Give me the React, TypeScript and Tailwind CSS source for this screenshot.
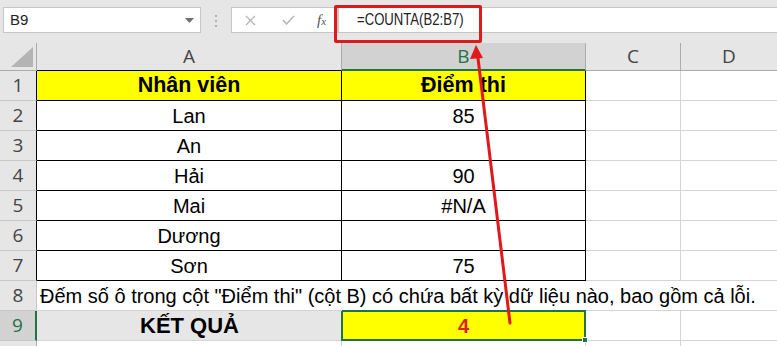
import React from "react";

const cols = ["A", "B", "C", "D"];

type Row = {
    n: number;
    a?: string;
    b?: string;
};

const rows: Row[] = [
    { n: 1, a: "Nhân viên", b: "Điểm thi" },
    { n: 2, a: "Lan", b: "85" },
    { n: 3, a: "An", b: "" },
    { n: 4, a: "Hải", b: "90" },
    { n: 5, a: "Mai", b: "#N/A" },
    { n: 6, a: "Dương", b: "" },
    { n: 7, a: "Sơn", b: "75" },
];

function FormulaBar() {
    return (
        <div className="flex items-start h-[43px] bg-[#e6e6e6] pt-[7px] pl-[3px]">
            <div className="flex items-center justify-between w-[198px] h-[26px] bg-white border border-[#c6c6c6] pl-[6px] pr-[6px]">
                <span className="text-[15px] text-[#222]">B9</span>
                <svg width="9" height="5" viewBox="0 0 9 5">
                    <path d="M0 0 L9 0 L4.5 5 Z" fill="#707070" />
                </svg>
            </div>
            <div className="flex flex-col gap-[3px] w-[30px] items-center pt-[8px]">
                <span className="w-[2px] h-[2px] bg-[#b0b0b0]" />
                <span className="w-[2px] h-[2px] bg-[#b0b0b0]" />
                <span className="w-[2px] h-[2px] bg-[#b0b0b0]" />
            </div>
            <div className="flex items-center w-[107px] h-[26px] bg-white border border-[#c6c6c6]">
                <svg className="ml-[13px]" width="11" height="11" viewBox="0 0 11 11">
                    <path d="M1 1 L10 10 M10 1 L1 10" stroke="#b8b8b8" strokeWidth="1.4" />
                </svg>
                <svg className="ml-[26px]" width="13" height="10" viewBox="0 0 13 10">
                    <path d="M1 5 L4.5 9 L12 1" stroke="#b8b8b8" strokeWidth="1.6" fill="none" />
                </svg>
                <span className="ml-[22px] text-[15px] italic text-[#555] font-['Liberation_Serif',serif]">
                    f<span className="text-[11px]">x</span>
                </span>
            </div>
            <div className="flex-1 h-[26px] bg-white border border-[#c6c6c6] border-r-0 pl-[18px] flex items-center">
                <span className="inline-block origin-left scale-x-[0.82] text-[16px] text-[#222] font-['Liberation_Sans',sans-serif]">
                    =COUNTA(B2:B7)
                </span>
            </div>
        </div>
    );
}

export default function App() {
    return (
        <div className="relative w-[777px] h-[346px] overflow-hidden bg-white font-['Liberation_Sans',Arial,sans-serif]">
            <FormulaBar />

            <div className="grid grid-cols-[37px_305px_244px_95px_1fr] grid-rows-[28px_repeat(10,30px)]">
                {/* header row */}
                <div className="relative bg-[#e6e6e6] border-r border-b border-[#ababab]">
                    <svg className="absolute right-[3px] bottom-[3px]" width="22" height="20" viewBox="0 0 22 20">
                        <path d="M22 0 L22 20 L0 20 Z" fill="#b4b4b4" />
                    </svg>
                </div>
                <div className="flex items-center justify-center bg-[#e6e6e6] border-r border-[#ababab] border-b border-b-black text-[19px] text-[#444] font-['Open_Sans',sans-serif]">
                    {cols[0]}
                </div>
                <div className="flex items-center justify-center bg-[#d2d2d2] border-r border-[#ababab] border-b-2 border-b-[#217346] text-[19px] text-[#217346] font-['Open_Sans',sans-serif]">
                    {cols[1]}
                </div>
                <div className="flex items-center justify-center bg-[#e6e6e6] border-r border-b border-[#ababab] text-[19px] text-[#444] font-['Open_Sans',sans-serif]">
                    {cols[2]}
                </div>
                <div className="flex items-center justify-center bg-[#e6e6e6] border-b border-[#ababab] text-[19px] text-[#444] font-['Open_Sans',sans-serif]">
                    {cols[3]}
                </div>

                {/* table rows 1-7 */}
                {rows.map((r) => (
                    <React.Fragment key={r.n}>
                        <div className="flex items-center justify-center bg-[#e6e6e6] border-b border-[#c8c8c8] border-r border-r-black text-[19px] text-[#444] font-['Open_Sans',sans-serif]">
                            {r.n}
                        </div>
                        <div
                            className={
                                r.n === 1
                                    ? "flex items-center justify-center bg-[#ffff00] border-r border-b border-black text-[21.5px] font-bold text-black"
                                    : "flex items-center justify-center border-r border-b border-black text-[20px] text-black"
                            }
                        >
                            {r.a}
                        </div>
                        <div
                            className={
                                r.n === 1
                                    ? "flex items-center justify-center bg-[#ffff00] border-r border-b border-black text-[21.5px] font-bold text-black"
                                    : "flex items-center justify-center border-r border-b border-black text-[20px] text-black"
                            }
                        >
                            {r.b}
                        </div>
                        <div className="border-r border-b border-[#d4d4d4]" />
                        <div className="border-b border-[#d4d4d4]" />
                    </React.Fragment>
                ))}

                {/* row 8: overflowing note */}
                <div className="flex items-center justify-center bg-[#e6e6e6] border-r border-b border-[#c8c8c8] text-[19px] text-[#444] font-['Open_Sans',sans-serif]">
                    8
                </div>
                <div className="relative z-10 flex items-center pl-[3px] border-b border-[#d4d4d4] text-[20px] text-black whitespace-nowrap">
                    Đếm số ô trong cột "Điểm thi" (cột B) có chứa bất kỳ dữ liệu nào, bao gồm cả lỗi.
                </div>
                <div className="border-b border-[#d4d4d4]" />
                <div className="border-b border-[#d4d4d4]" />
                <div className="border-b border-[#d4d4d4]" />

                {/* row 9: result */}
                <div className="flex items-center justify-center bg-[#d2d2d2] border-b border-[#c8c8c8] border-r-2 border-r-[#217346] text-[19px] text-[#217346] font-['Open_Sans',sans-serif]">
                    9
                </div>
                <div className="flex items-center justify-center bg-[#e6e6e6] border-b border-[#d4d4d4] text-[22px] font-bold text-black">
                    KẾT QUẢ
                </div>
                <div className="relative flex items-center justify-center bg-[#ffff00] border-2 border-[#217346] text-[20px] font-bold text-[#dd2222] -mt-px -ml-px">
                    4
                    <span className="absolute -right-[4px] -bottom-[4px] w-[6px] h-[6px] bg-[#217346] border border-white" />
                </div>
                <div className="border-r border-b border-[#d4d4d4]" />
                <div className="border-b border-[#d4d4d4]" />

                {/* row 10 */}
                <div className="bg-[#e6e6e6] border-r border-[#ababab]" />
                <div className="border-r border-[#d4d4d4]" />
                <div className="border-r border-[#d4d4d4]" />
                <div className="border-r border-[#d4d4d4]" />
                <div />
            </div>

            {/* annotation: red box on formula and arrow */}
            <div className="absolute left-[334px] top-[5px] w-[148px] h-[38px] border-[3px] border-[#e0191b] rounded-[2px]" />
            <svg className="absolute left-0 top-0 pointer-events-none" width="777" height="346" viewBox="0 0 777 346">
                <line x1="510" y1="323" x2="477.5" y2="54" stroke="#e0191b" strokeWidth="3" strokeLinecap="round" />
                <path d="M476 45 L470 59 L483 58 Z" fill="#e0191b" />
            </svg>
        </div>
    );
}
